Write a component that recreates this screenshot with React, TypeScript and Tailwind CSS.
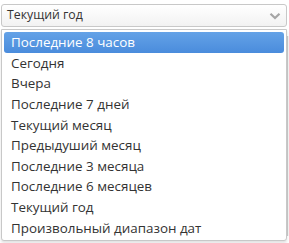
import { useState } from "react";

const options = [
  "Последние 8 часов",
  "Сегодня",
  "Вчера",
  "Последние 7 дней",
  "Текущий месяц",
  "Предыдуший месяц",
  "Последние 3 месяца",
  "Последние 6 месяцев",
  "Текущий год",
  "Произвольный диапазон дат",
];

export default function App() {
  const [value] = useState("Текущий год");
  const [active, setActive] = useState(0);

  return (
    <div
      className="relative h-[243px] w-[289px] overflow-hidden bg-white text-[#333]"
      style={{ fontFamily: '"Open Sans", "Liberation Sans", sans-serif' }}
    >
      {/* page content peeking out on the right */}
      <div className="absolute right-0 top-[36px] h-[200px] w-[2px] border-l border-[#ccc] bg-[#f4f4f4]" />

      <div className="px-[1px] pt-[4px]">
        <div className="flex h-[23px] w-[286px] items-center justify-between rounded-[3px] border border-[#c8c8c8] bg-gradient-to-b from-white to-[#f2f2f2] pl-[5px] pr-[5px]">
          <span className="text-[12.3px] leading-none">{value}</span>
          <svg width="12" height="8" viewBox="0 0 12 8">
            <path d="M1.5 1.8 L6 6 L10.5 1.8" fill="none" stroke="#a5a5a5" strokeWidth="2.2" />
          </svg>
        </div>

        <ul className="relative mt-[2px] w-[286px] rounded-b-[3px] border border-[#c8c8c8] bg-white px-[2px] py-[2px] shadow-[0_2px_3px_rgba(0,0,0,0.12)]">
          {options.map((o, i) => (
            <li
              key={o}
              onMouseEnter={() => setActive(i)}
              className={
                i === active
                  ? "flex h-[20.6px] items-center rounded-[3px] bg-gradient-to-b from-[#64a2e7] to-[#4a8cdc] pl-[7px] text-[13.4px] text-white"
                  : "flex h-[20.6px] items-center pl-[7px] text-[13.4px] text-[#333]"
              }
            >
              {o}
            </li>
          ))}
        </ul>
      </div>
    </div>
  );
}
